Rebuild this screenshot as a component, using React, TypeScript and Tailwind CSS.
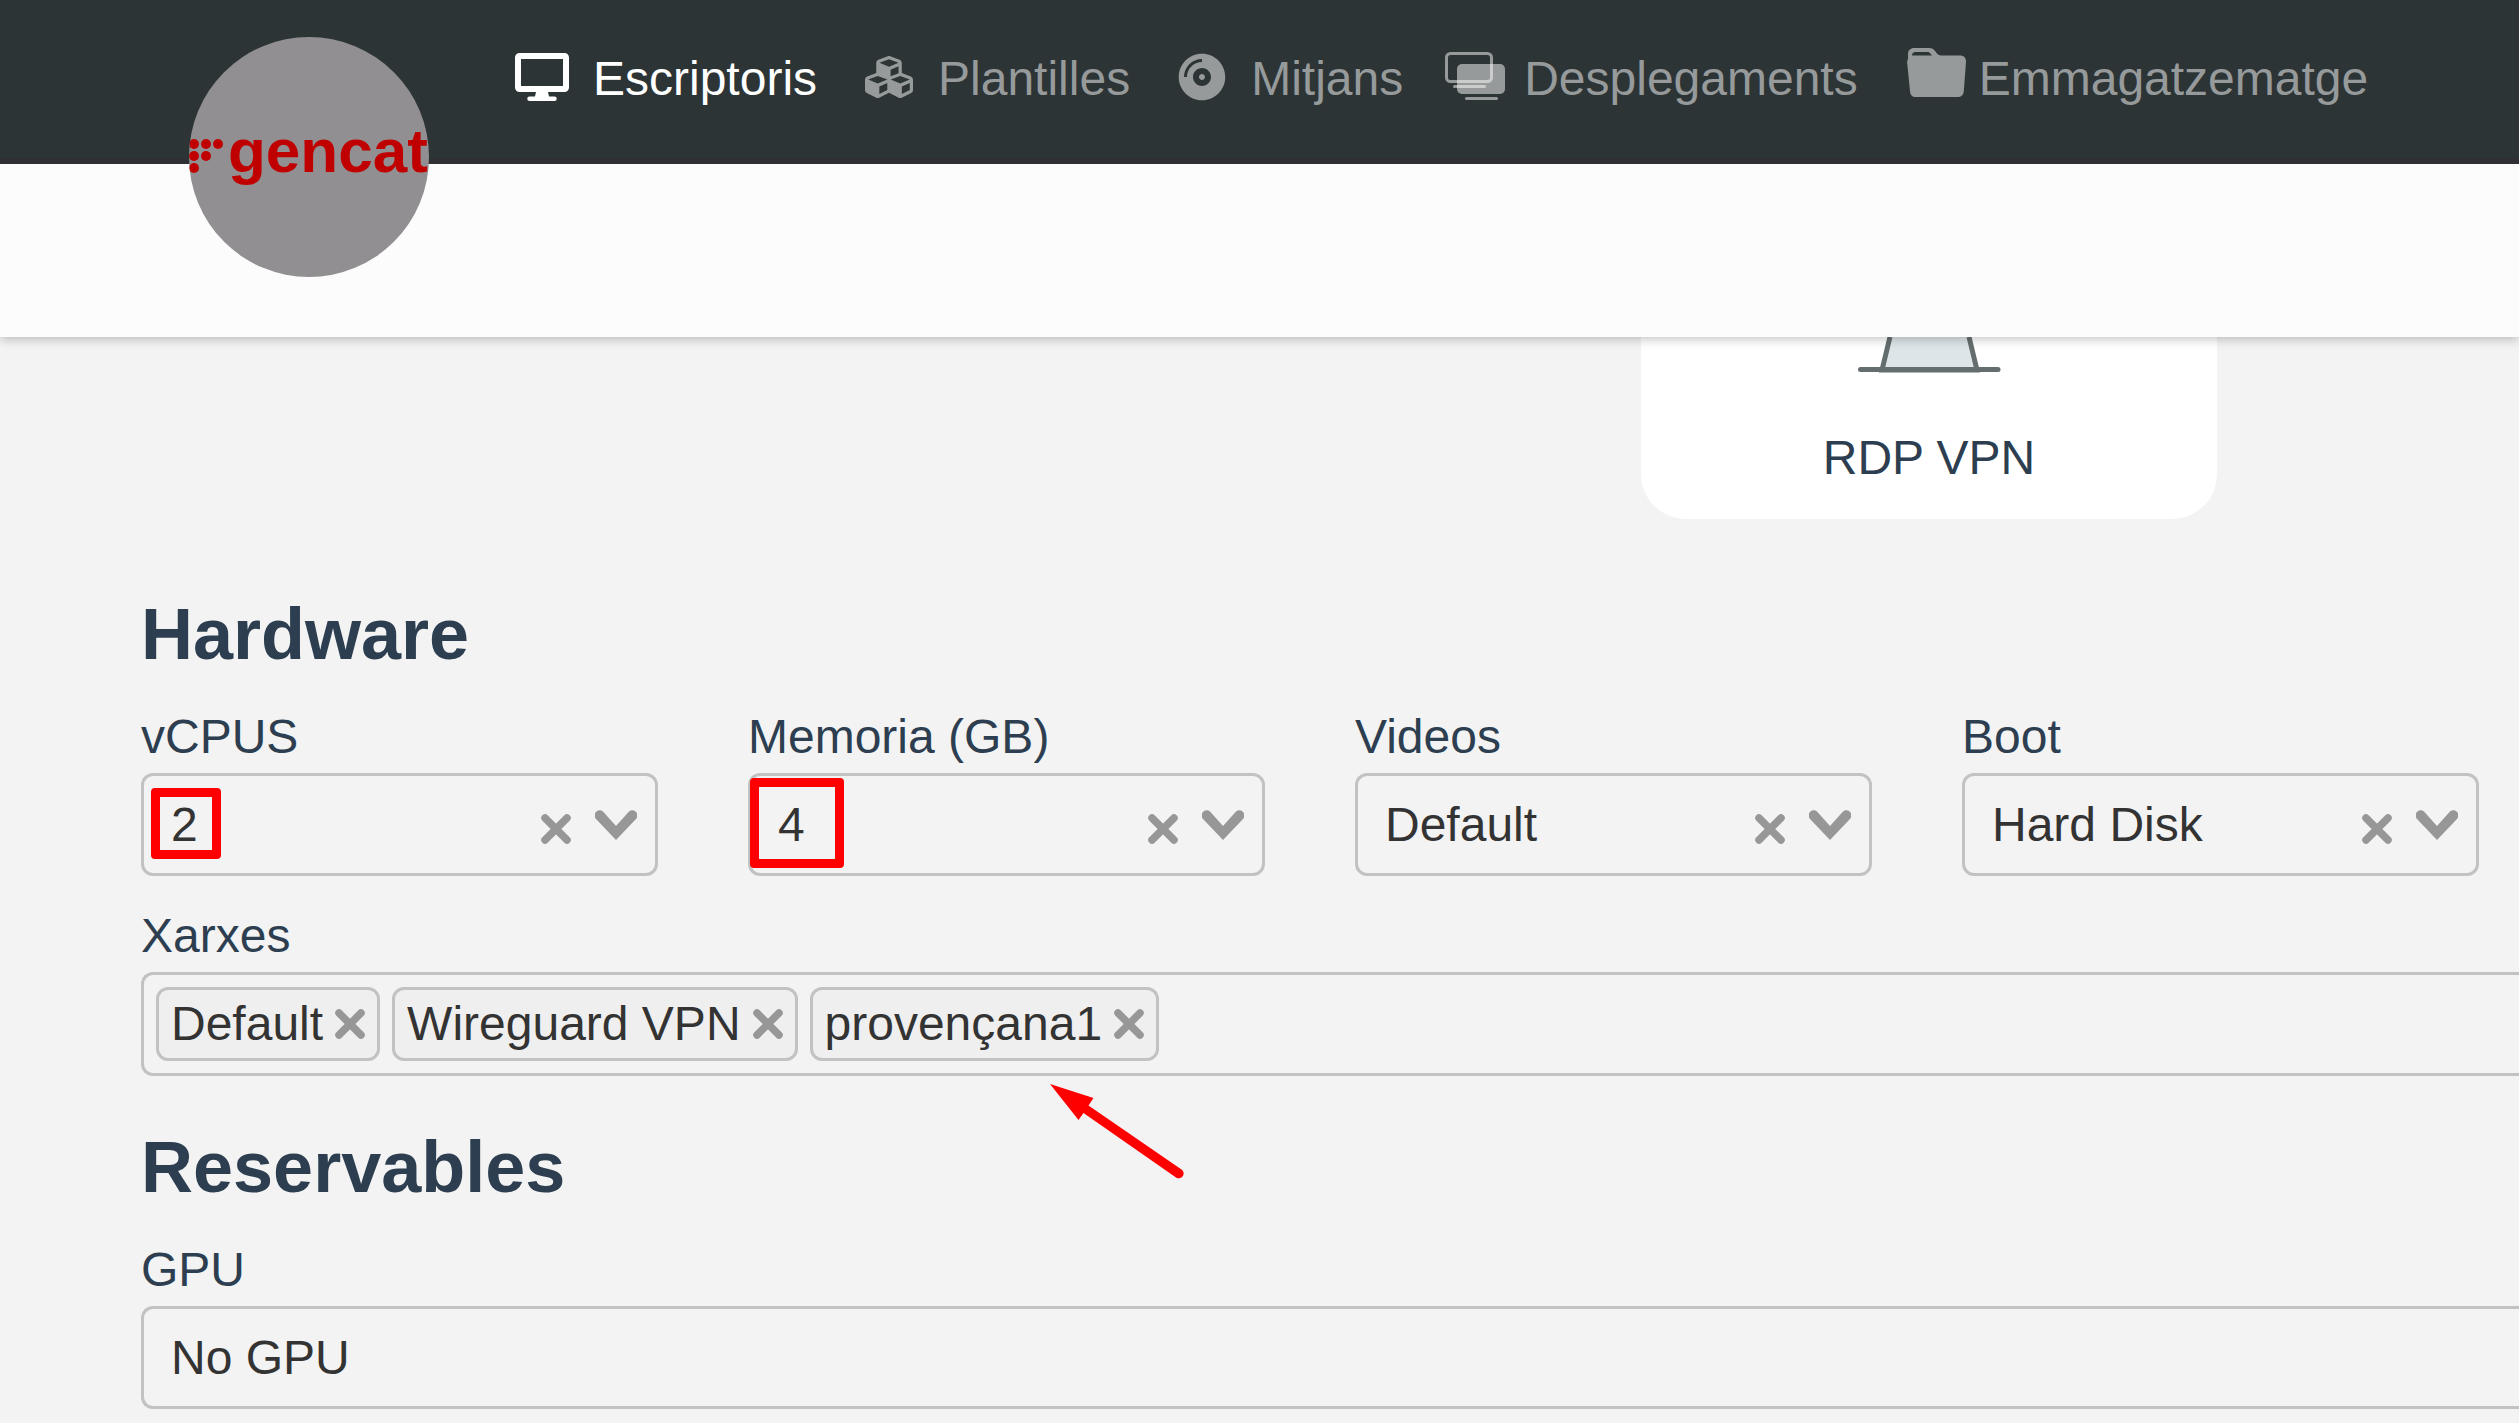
import { useState, type ReactNode } from "react";
import { FaCompactDisc, FaCubes } from "react-icons/fa";

function DesktopIcon() {
  return (
    <svg viewBox="0 0 54 48" className="w-[54px] h-12 shrink-0 mr-1" fill="currentColor">
      <path
        fillRule="evenodd"
        d="M4.500 0h45A4.500 4.500 0 0 1 54 4.500v30a4.500 4.500 0 0 1-4.500 4.500H33l1 4.500h5.500a2.250 2.250 0 0 1 0 4.500h-25a2.250 2.250 0 0 1 0-4.500H20l1-4.500H4.500A4.500 4.500 0 0 1 0 34.500v-30A4.500 4.500 0 0 1 4.500 0ZM6 6v27h42V6Z"
      />
    </svg>
  );
}

function DeploymentsIcon() {
  return (
    <svg viewBox="0 1 60 50" className="w-[60px] h-[50px] shrink-0" fill="#fff" fillOpacity="0.5">
      <rect x="12" y="13" width="48" height="30" rx="5" />
      <rect x="20" y="46" width="33" height="3" rx="1.500" />
      <rect x="8" y="34" width="33" height="3" rx="1.500" />
      <rect x="1.500" y="2.500" width="45" height="28" rx="4" fill="none" stroke="#fff" strokeOpacity="0.5" strokeWidth="3" />
    </svg>
  );
}

function FolderIcon() {
  return (
    <svg viewBox="0 0 72 58" className="w-[72px] h-[58px] shrink-0" fill="currentColor">
      <path
        fillRule="evenodd"
        d="M14 11V6C14 2.500 16.500 0 20 0h15c3 0 4.600 1.200 6.200 3.200l2 2.600C44.400 7 45.500 7.500 47 7.500h19c4 0 6.200 2.500 6 6.500l-2.200 29c-.3 4-2.600 6-6.300 6H22c-3.700 0-5.800-2-6-6L13.200 15c-.1-1.800.1-3 .8-4ZM18 7.500h20L36.300 5.400C35.400 4.300 34.600 4 33 4H21.500C19.300 4 18 5.300 18 7.500Z"
      />
    </svg>
  );
}

function CrossIcon() {
  return (
    <svg viewBox="0 0 30 30" className="size-[30px]" stroke="currentColor" strokeWidth="7.500" strokeLinecap="round">
      <path d="M4 4l22 22M26 4L4 26" />
    </svg>
  );
}

function ChevronIcon() {
  return (
    <svg viewBox="0 0 42 30" className="w-[42px] h-[30px]" fill="currentColor">
      <path d="M1.500 9.500L21 30L40.500 9.500A5 5 0 0 0 34 1.500L21 16L8 1.500A5 5 0 0 0 1.500 9.500Z" />
    </svg>
  );
}

const navItems: { label: string; icon: ReactNode; active?: boolean }[] = [
  { label: "Escriptoris", icon: <DesktopIcon />, active: true },
  { label: "Plantilles", icon: <FaCubes className="size-12 shrink-0" /> },
  { label: "Mitjans", icon: <FaCompactDisc className="size-12 shrink-0" /> },
  { label: "Desplegaments", icon: <DeploymentsIcon /> },
  { label: "Emmagatzematge", icon: <FolderIcon /> },
];

const hardware = [
  { id: "vcpus", label: "vCPUS", value: "2", mark: "left-[7px] top-3 w-[70px] h-[71px]" },
  { id: "memory", label: "Memoria (GB)", value: "4", mark: "-left-px top-0.5 w-[94px] h-[90px]" },
  { id: "videos", label: "Videos", value: "Default" },
  { id: "boot", label: "Boot", value: "Hard Disk" },
];

function Label({ id, children }: { id: string; children: ReactNode }) {
  return (
    <label htmlFor={id} className="block leading-[66px] mb-[3px]">
      {children}
    </label>
  );
}

function SelectField({ id, label, value, mark }: { id: string; label: string; value: string; mark?: string }) {
  const [current, setCurrent] = useState(value);

  return (
    <div>
      <Label id={id}>{label}</Label>
      <div className="relative h-[103px] border-3 border-[#c2c2c2] rounded-xl">
        <select
          id={id}
          value={current}
          onChange={(e) => setCurrent(e.target.value)}
          className="appearance-none w-full h-full pl-[27px] pr-36 bg-transparent text-[#333] outline-none"
        >
          <option value=""></option>
          <option value={value}>{value}</option>
        </select>
        <div className="absolute right-[18px] inset-y-0 flex items-center gap-6 text-[#979797] pointer-events-none">
          <button type="button" aria-label="Clear" onClick={() => setCurrent("")} className="pointer-events-auto pt-2">
            <CrossIcon />
          </button>
          <ChevronIcon />
        </div>
        {mark && <div className={`absolute border-9 border-[#f00] rounded pointer-events-none ${mark}`} />}
      </div>
    </div>
  );
}

function NetworksField() {
  const [networks, setNetworks] = useState(["Default", "Wireguard VPN", "provençana1"]);

  return (
    <div className="relative mt-[27px]">
      <Label id="networks">Xarxes</Label>
      <div className="flex items-center gap-3 h-[104px] pl-3 border-3 border-r-0 border-[#c2c2c2] rounded-l-xl">
        {networks.map((name) => (
          <span
            key={name}
            className="flex items-center gap-3 h-[74px] px-3 border-3 border-[#c2c2c2] rounded-xl bg-[#efefef] text-[#333] whitespace-nowrap"
          >
            {name}
            <button
              type="button"
              aria-label={`Deselect ${name}`}
              onClick={() => setNetworks(networks.filter((n) => n !== name))}
              className="text-[#979797]"
            >
              <CrossIcon />
            </button>
          </span>
        ))}
        <input id="networks" type="text" className="flex-1 min-w-0 h-full bg-transparent text-[#333] outline-none" />
      </div>
      <svg viewBox="0 0 136 96" className="absolute left-[908px] top-[181px] w-[136px] h-24 pointer-events-none">
        <path d="M1 0L44.500 14L39.500 21.500L132.500 85.500A4.800 4.800 0 0 1 127 93.500L34.500 29L29.500 36Z" fill="#f00" />
      </svg>
    </div>
  );
}

export default function App() {
  return (
    <div className="min-h-screen bg-[#f3f3f3] text-[#2c3e50] text-[48px] font-['Liberation_Sans',Arial,sans-serif] overflow-hidden">
      <div className="relative z-10 bg-[#fcfcfc] shadow-[0_2px_10px_rgba(0,0,0,0.25)]">
        <header className="flex h-[164px] pl-[189px] bg-[#2d3436] border-b-6 border-[#2f2f35]">
          <a
            href="#"
            className="mt-[37px] size-60 shrink-0 rounded-full bg-[#918f91] overflow-hidden flex items-center whitespace-nowrap text-[#c00000]"
          >
            <svg viewBox="0 0 36 36" className="size-9 shrink-0" fill="currentColor">
              <circle cx="5" cy="5" r="5" />
              <circle cx="17" cy="5" r="5" />
              <circle cx="29" cy="5" r="5" />
              <circle cx="5" cy="17" r="5" />
              <circle cx="17" cy="17" r="5" />
              <circle cx="5" cy="29" r="5" />
            </svg>
            <span className="pl-[3px] pb-3 text-[62px] font-bold leading-[72px]">gencat</span>
          </a>
          <nav className="flex items-center gap-12 h-[158px] ml-[91px]">
            {navItems.map(({ label, icon, active }) => (
              <a
                key={label}
                href="#"
                className={`flex items-center gap-[25px] leading-[56px] ${active ? "text-white" : "text-[#969a9b]"}`}
              >
                <span className="flex items-center justify-center w-12 h-14 pb-1 shrink-0">{icon}</span>
                {label}
              </a>
            ))}
          </nav>
        </header>
        <div className="h-[173px]" />
      </div>

      <main className="pl-[141px]">
        <section className="flex flex-col items-center w-[576px] h-[182px] ml-auto mr-[302px] bg-white rounded-b-[45px]">
          <svg viewBox="0 0 144 36" className="w-36 h-9 shrink-0" stroke="#656e6e" strokeWidth="5">
            <path d="M33 0L25 33H120L112 0" fill="#dde5e8" />
            <path d="M3.500 32.500H141" strokeLinecap="round" />
          </svg>
          <p className="mt-[53px] leading-[64px]">RDP VPN</p>
        </section>

        <section className="pt-[79px]">
          <h2 className="text-[72px] leading-[72px] font-bold">Hardware</h2>
          <div className="grid grid-cols-4 gap-[90px] mt-[34px] mr-10">
            {hardware.map((field) => (
              <SelectField key={field.id} {...field} />
            ))}
          </div>
          <NetworksField />
        </section>

        <section className="pt-[55px]">
          <h2 className="text-[72px] leading-[72px] font-bold">Reservables</h2>
          <div className="mt-[34px]">
            <Label id="gpu">GPU</Label>
            <select
              id="gpu"
              className="block appearance-none w-full h-[103px] pl-[27px] border-3 border-r-0 border-[#c2c2c2] rounded-l-xl bg-transparent text-[#333] outline-none"
            >
              <option>No GPU</option>
            </select>
          </div>
        </section>
      </main>
    </div>
  );
}
